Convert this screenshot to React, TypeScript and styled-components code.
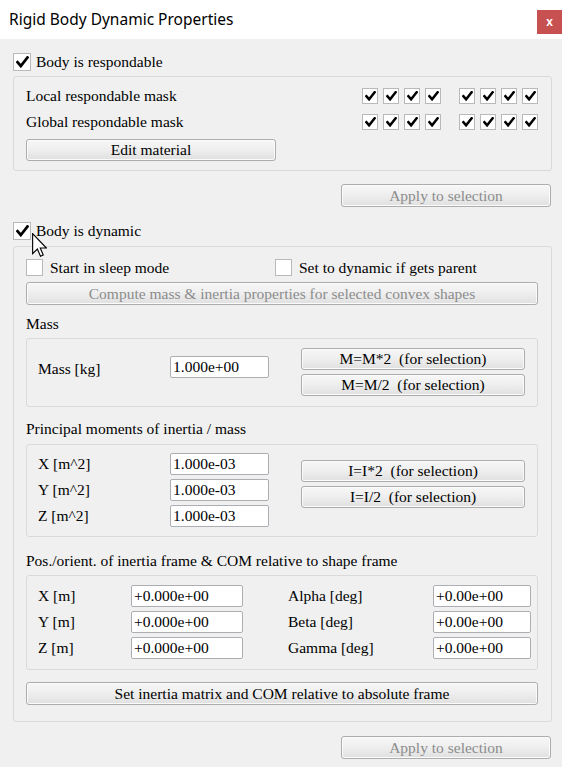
import React from 'react';
import styled, { createGlobalStyle } from 'styled-components';

const SERIF = `"Liberation Serif", Tinos, "Times New Roman", Times, serif`;

const Global = createGlobalStyle`
  html, body { margin: 0; padding: 0; background: #f0f0f0; }
  body { font-family: ${SERIF}; font-size: 15.5px; color: #000; }
  * { box-sizing: border-box; }
`;

const Window = styled.div`
  position: relative;
  width: 562px;
  height: 767px;
  background: #f0f0f0;
  display: flex;
  flex-direction: column;
  overflow: hidden;
  font-family: ${SERIF};
  font-size: 15.5px;
`;

const TitleBar = styled.div`
  height: 39px;
  flex: none;
  background: #fff;
  display: flex;
  align-items: flex-start;
  justify-content: space-between;
`;

const Title = styled.div`
  font-family: "Noto Sans", "Open Sans", sans-serif;
  font-size: 15.5px;
  padding: 8px 0 0 9px;
  color: #000;
`;

const Close = styled.div`
  width: 25px;
  height: 24px;
  margin-top: 10px;
  background: #c75050;
  color: #fff;
  display: flex;
  align-items: center;
  justify-content: center;
  font-family: "Liberation Sans", sans-serif;
  font-size: 12px;
  font-weight: bold;
`;

const Body = styled.div`
  padding: 0 10px 0 13px;
  display: flex;
  flex-direction: column;
`;

const CheckRow = styled.label<{ $top: number }>`
  display: flex;
  align-items: center;
  gap: 5px;
  height: 18px;
  margin-top: ${p => p.$top}px;
  line-height: 18px;
`;

const Box = styled.span<{ $size: number }>`
  width: ${p => p.$size}px;
  height: ${p => p.$size}px;
  flex: none;
  border: 1px solid #b9b9b9;
  background: #fff;
  display: inline-flex;
  align-items: center;
  justify-content: center;
`;

const Group = styled.div<{ $top: number; $pad: string }>`
  margin-top: ${p => p.$top}px;
  border: 1px solid #d9d9d9;
  border-radius: 3px;
  padding: ${p => p.$pad};
  display: flex;
  flex-direction: column;
`;

const MaskRow = styled.div<{ $top: number }>`
  display: flex;
  align-items: center;
  justify-content: space-between;
  height: 22px;
  margin-top: ${p => p.$top}px;
`;

const MaskBoxes = styled.div`
  display: flex;
  gap: 5px;
`;

const MaskSpacer = styled.span`
  width: 8px;
`;

const Button = styled.button<{ $w?: number; $h?: number; $top?: number; $disabled?: boolean }>`
  width: ${p => (p.$w ? `${p.$w}px` : '100%')};
  height: ${p => p.$h ?? 22}px;
  margin-top: ${p => p.$top ?? 0}px;
  border: 1px solid #adadad;
  border-radius: 3px;
  background: linear-gradient(to bottom, #f7f7f7 0%, #eeeeee 50%, #e0e0e0 100%);
  box-shadow: inset 0 0 0 1px #fbfbfb;
  font-family: ${SERIF};
  font-size: 15.5px;
  color: ${p => (p.$disabled ? '#8c8c8c' : '#000')};
  padding: 0;
  display: flex;
  align-items: center;
  justify-content: center;
  white-space: pre;
  flex: none;
`;

const ApplyButton = styled(Button)`
  align-self: flex-end;
  margin-right: 1px;
`;

const Options = styled.div`
  display: grid;
  grid-template-columns: 249px auto;
  height: 17px;
`;

const OptionItem = styled.label`
  display: flex;
  align-items: center;
  gap: 7px;
  line-height: 17px;
`;

const SectionLabel = styled.div<{ $top: number }>`
  margin-top: ${p => p.$top}px;
  line-height: 18px;
  height: 18px;
`;

const SubBox = styled.div<{ $top: number; $pad: string }>`
  margin-top: ${p => p.$top}px;
  border: 1px solid #dadada;
  border-radius: 3px;
  padding: ${p => p.$pad};
  display: flex;
  align-items: flex-start;
`;

const FieldGrid = styled.div<{ $cols: string }>`
  display: grid;
  grid-template-columns: ${p => p.$cols};
  grid-auto-rows: 22px;
  row-gap: 4px;
  align-items: center;
`;

const FieldLabel = styled.span`
  line-height: 18px;
`;

const Input = styled.div<{ $w: number }>`
  width: ${p => p.$w}px;
  height: 22px;
  border: 1px solid #acaeb4;
  border-radius: 2px;
  background: #fff;
  padding: 0 2px;
  line-height: 20px;
  white-space: nowrap;
`;

const ButtonStack = styled.div<{ $top: number }>`
  margin-left: auto;
  margin-top: ${p => p.$top}px;
  display: flex;
  flex-direction: column;
  gap: 4px;
`;

const MassLabel = styled.span`
  width: 132px;
  margin-top: 12px;
  line-height: 18px;
`;

const MassInput = styled(Input)`
  margin-top: 8px;
`;

const Cursor = styled.svg`
  position: absolute;
  left: 32px;
  top: 233px;
`;

const Check = () => (
  <svg width="13" height="12" viewBox="0 0 13 12">
    <path d="M1.5 6.2 L4.8 10 L11.5 1.5" fill="none" stroke="#000" strokeWidth="2.8" strokeLinecap="square" strokeLinejoin="miter" />
  </svg>
);

const SmallCheck = () => (
  <svg width="11" height="10" viewBox="0 0 13 12">
    <path d="M1.5 6.2 L4.8 10 L11.5 1.5" fill="none" stroke="#000" strokeWidth="3" strokeLinecap="square" />
  </svg>
);

const Mask = () => (
  <MaskBoxes>
    {[0, 1, 2, 3].map(i => (
      <Box key={i} $size={16}><SmallCheck /></Box>
    ))}
    <MaskSpacer />
    {[4, 5, 6, 7].map(i => (
      <Box key={i} $size={16}><SmallCheck /></Box>
    ))}
  </MaskBoxes>
);

export default function App() {
  return (
    <Window>
      <Global />
      <TitleBar>
        <Title>Rigid Body Dynamic Properties</Title>
        <Close>x</Close>
      </TitleBar>
      <Body>
        <CheckRow $top={14}>
          <Box $size={18}><Check /></Box>
          <span>Body is respondable</span>
        </CheckRow>
        <Group $top={5} $pad="8px 13px 9px 12px">
          <MaskRow $top={0}>
            <span>Local respondable mask</span>
            <Mask />
          </MaskRow>
          <MaskRow $top={4}>
            <span>Global respondable mask</span>
            <Mask />
          </MaskRow>
          <Button $w={250} $top={6}>Edit material</Button>
        </Group>
        <ApplyButton $w={210} $h={23} $top={13} $disabled>Apply to selection</ApplyButton>

        <CheckRow $top={15}>
          <Box $size={18}><Check /></Box>
          <span>Body is dynamic</span>
        </CheckRow>
        <Group $top={6} $pad="12px 13px 16px 12px">
          <Options>
            <OptionItem><Box $size={17} />Start in sleep mode</OptionItem>
            <OptionItem><Box $size={17} />Set to dynamic if gets parent</OptionItem>
          </Options>
          <Button $h={23} $top={6} $disabled>Compute mass &amp; inertia properties for selected convex shapes</Button>

          <SectionLabel $top={10}>Mass</SectionLabel>
          <SubBox $top={5} $pad="9px 12px 10px 11px">
            <MassLabel>Mass [kg]</MassLabel>
            <MassInput $w={99}>1.000e+00</MassInput>
            <ButtonStack $top={0}>
              <Button $w={224}>M=M*2  (for selection)</Button>
              <Button $w={224}>M=M/2  (for selection)</Button>
            </ButtonStack>
          </SubBox>

          <SectionLabel $top={13}>Principal moments of inertia / mass</SectionLabel>
          <SubBox $top={6} $pad="8px 12px 9px 11px">
            <FieldGrid $cols="132px 99px">
              <FieldLabel>X [m^2]</FieldLabel>
              <Input $w={99}>1.000e-03</Input>
              <FieldLabel>Y [m^2]</FieldLabel>
              <Input $w={99}>1.000e-03</Input>
              <FieldLabel>Z [m^2]</FieldLabel>
              <Input $w={99}>1.000e-03</Input>
            </FieldGrid>
            <ButtonStack $top={7}>
              <Button $w={224}>I=I*2  (for selection)</Button>
              <Button $w={224}>I=I/2  (for selection)</Button>
            </ButtonStack>
          </SubBox>

          <SectionLabel $top={15}>Pos./orient. of inertia frame &amp; COM relative to shape frame</SectionLabel>
          <SubBox $top={5} $pad="9px 6px 10px 11px">
            <FieldGrid $cols="93px 112px 45px 145px 98px">
              <FieldLabel>X [m]</FieldLabel>
              <Input $w={112}>+0.000e+00</Input>
              <span />
              <FieldLabel>Alpha [deg]</FieldLabel>
              <Input $w={98}>+0.00e+00</Input>
              <FieldLabel>Y [m]</FieldLabel>
              <Input $w={112}>+0.000e+00</Input>
              <span />
              <FieldLabel>Beta [deg]</FieldLabel>
              <Input $w={98}>+0.00e+00</Input>
              <FieldLabel>Z [m]</FieldLabel>
              <Input $w={112}>+0.000e+00</Input>
              <span />
              <FieldLabel>Gamma [deg]</FieldLabel>
              <Input $w={98}>+0.00e+00</Input>
            </FieldGrid>
          </SubBox>
          <Button $h={23} $top={12}>Set inertia matrix and COM relative to absolute frame</Button>
        </Group>
        <ApplyButton $w={210} $h={23} $top={14} $disabled>Apply to selection</ApplyButton>
      </Body>
      <Cursor width="15" height="25" viewBox="0 0 12 20">
        <path d="M0.5 0.5 L0.5 16.5 L4.3 12.8 L6.8 18.6 L9 17.6 L6.6 12 L11.5 12 Z" fill="#fff" stroke="#000" strokeWidth="0.9" strokeLinejoin="miter" />
      </Cursor>
    </Window>
  );
}
